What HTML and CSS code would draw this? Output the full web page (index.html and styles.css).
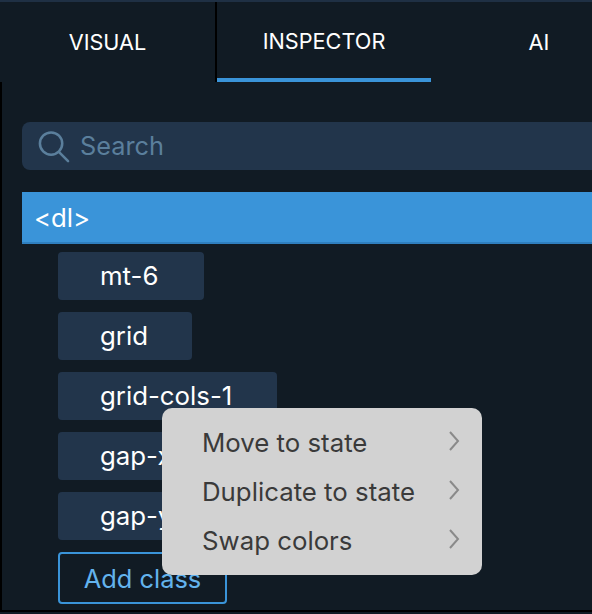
FILE: index.html
```html
<!DOCTYPE html>
<html>
<head>
    <meta charset="UTF-8">
    <title>Inspector</title>
    <link rel="stylesheet" href="styles.css">
</head>
<body>
    <div class="panel">
        <div class="tabs">
            <div class="tab tab-visual">VISUAL</div>
            <div class="tab tab-inspector">INSPECTOR</div>
            <div class="tab tab-ai">AI</div>
        </div>

        <div class="content">
            <div class="search">
                <svg class="search-icon" width="33" height="34" viewBox="0 0 34 34" fill="none" stroke="#5b7f9c" stroke-width="2.6" stroke-linecap="round">
                    <circle cx="14.5" cy="14.5" r="11.5"/>
                    <path d="M23 23.5 L32 32.5"/>
                </svg>
                <span class="search-text">Search</span>
            </div>

            <div class="element-row">&lt;dl&gt;</div>

            <div class="chips">
                <div class="chip chip-mt">mt-6</div>
                <div class="chip chip-grid">grid</div>
                <div class="chip chip-cols">grid-cols-1</div>
                <div class="chip chip-gap">gap-x-4</div>
                <div class="chip chip-gap">gap-y-4</div>
                <div class="add-class">Add class</div>
            </div>
        </div>

        <div class="menu">
            <div class="menu-item">
                <span>Move to state</span>
                <svg class="chevron" width="12" height="20" viewBox="0 0 12 20" fill="none" stroke="#8a8a8a" stroke-width="2"><path d="M2 1 L10 10 L2 19"/></svg>
            </div>
            <div class="menu-item">
                <span>Duplicate to state</span>
                <svg class="chevron" width="12" height="20" viewBox="0 0 12 20" fill="none" stroke="#8a8a8a" stroke-width="2"><path d="M2 1 L10 10 L2 19"/></svg>
            </div>
            <div class="menu-item">
                <span>Swap colors</span>
                <svg class="chevron" width="12" height="20" viewBox="0 0 12 20" fill="none" stroke="#8a8a8a" stroke-width="2"><path d="M2 1 L10 10 L2 19"/></svg>
            </div>
        </div>
    </div>
</body>
</html>
```

FILE: styles.css
```css
html, body {
    margin: 0;
    padding: 0;
    background-color: #111b24;
}

.panel {
    position: relative;
    width: 592px;
    height: 614px;
    overflow: hidden;
    box-sizing: border-box;
    border-top: 2px solid #1f3044;
    background-color: #111b24;
    font-family: Inter, "Liberation Sans", sans-serif;
}

.tabs {
    display: flex;
    height: 80px;
}

.tab {
    flex: none;
    display: flex;
    align-items: center;
    justify-content: center;
    box-sizing: border-box;
    color: #fff;
    font-size: 21.7px;
}

.tab-visual {
    width: 217px;
    border-right: 2px solid #000;
}

.tab-inspector {
    width: 214px;
    border-bottom: 4px solid #3a94d9;
    padding-top: 2px;
}

.tab-ai {
    width: 216px;
}

.content {
    height: 530px;
    box-sizing: border-box;
    padding: 40px 0 0 22px;
    border-left: 2px solid #000;
    border-bottom: 2px solid #000;
}

.search {
    display: flex;
    align-items: center;
    gap: 10px;
    height: 48px;
    margin-left: -2px;
    margin-right: -10px;
    padding-left: 15px;
    border-radius: 8px;
    background-color: #22354b;
}

.search-text {
    color: #5b7f9c;
    font-size: 25.3px;
    padding-bottom: 2px;
}

.element-row {
    display: flex;
    align-items: center;
    box-sizing: border-box;
    height: 52px;
    margin: 22px 0 8px -2px;
    padding-left: 12px;
    color: #fff;
    font-size: 25.8px;
    background-color: #3a94d9;
    border-bottom: 2px solid #2f7fbf;
}

.chips {
    display: flex;
    flex-direction: column;
    align-items: flex-start;
    gap: 12px;
    margin-left: 34px;
}

.chip {
    display: flex;
    align-items: center;
    height: 48px;
    box-sizing: border-box;
    padding: 0 0 2px 42px;
    border-radius: 4px;
    color: #fff;
    font-size: 25.8px;
    background-color: #22354b;
}

.chip-mt { width: 146px; }
.chip-grid { width: 134px; }
.chip-cols { width: 219px; }
.chip-gap { width: 200px; }

.add-class {
    display: flex;
    align-items: center;
    justify-content: center;
    box-sizing: border-box;
    width: 169px;
    height: 52px;
    border: 2px solid #3a94d9;
    border-radius: 4px;
    color: #63b3ed;
    font-size: 25.4px;
}

.menu {
    position: absolute;
    left: 162px;
    top: 406px;
    width: 320px;
    height: 167px;
    box-sizing: border-box;
    padding: 10px 22px 0 40px;
    border-radius: 10px;
    background-color: #d2d2d2;
    color: #3a3a3a;
    font-size: 25.8px;
}

.menu-item {
    display: flex;
    align-items: center;
    justify-content: space-between;
    height: 49px;
}

.chevron {
    margin-bottom: 4px;
}
```
